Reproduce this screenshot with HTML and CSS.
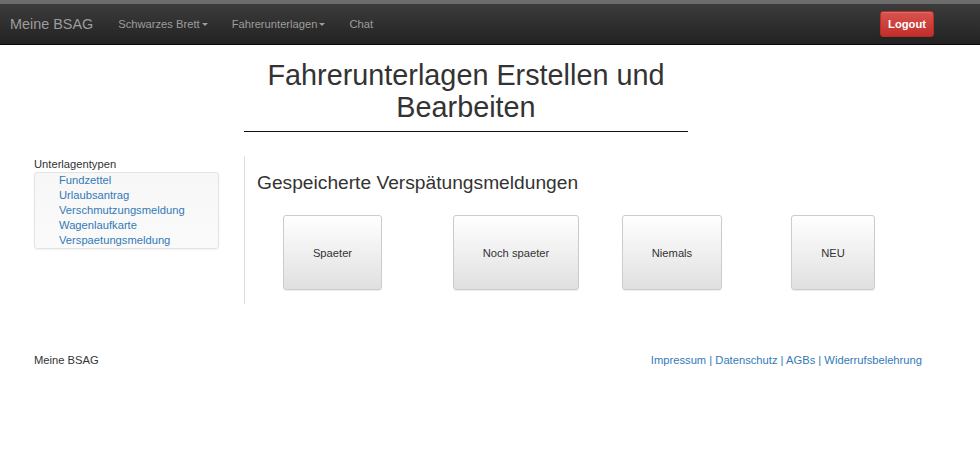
FILE: index.html
```html
<!DOCTYPE html>
<html lang="de">
<head>
<meta charset="utf-8">
<title>Meine BSAG</title>
<link rel="stylesheet" href="styles.css">
</head>
<body>
<div class="topstrip"></div>
<nav class="navbar">
  <a class="brand" href="#">Meine BSAG</a>
  <a class="navlink" href="#">Schwarzes Brett<span class="caret"></span></a>
  <a class="navlink" href="#">Fahrerunterlagen<span class="caret"></span></a>
  <a class="navlink" href="#">Chat</a>
  <button class="logout">Logout</button>
</nav>
<main class="container">
  <h1 class="title">Fahrerunterlagen Erstellen und Bearbeiten</h1>
  <div class="row">
    <aside class="sidebar">
      <div class="side-label">Unterlagentypen</div>
      <ul class="well">
        <li><a href="#">Fundzettel</a></li>
        <li><a href="#">Urlaubsantrag</a></li>
        <li><a href="#">Verschmutzungsmeldung</a></li>
        <li><a href="#">Wagenlaufkarte</a></li>
        <li><a href="#">Verspaetungsmeldung</a></li>
      </ul>
    </aside>
    <section class="content">
      <h3 class="subtitle">Gespeicherte Verspätungsmeldungen</h3>
      <div class="buttons">
        <button class="tile tile-1">Spaeter</button>
        <button class="tile tile-2">Noch spaeter</button>
        <button class="tile tile-3">Niemals</button>
        <button class="tile tile-4">NEU</button>
      </div>
    </section>
  </div>
  <footer class="footer">
    <span>Meine BSAG</span>
    <span class="links"><a href="#">Impressum</a> | <a href="#">Datenschutz</a> | <a href="#">AGBs</a> | <a href="#">Widerrufsbelehrung</a></span>
  </footer>
</main>
</body>
</html>
```

FILE: styles.css
```css
html, body {
  margin: 0;
  padding: 0;
  background: #fff;
}
body {
  font-family: "Liberation Sans", Arial, sans-serif;
  font-size: 11.2px;
  line-height: 16px;
  color: #333;
}
a {
  color: #337ab7;
  text-decoration: none;
}
.topstrip {
  height: 4px;
  background: #6c6c6c;
}
.navbar {
  height: 40px;
  border-bottom: 1px solid #080808;
  background: linear-gradient(to bottom, #3c3c3c 0%, #222 100%);
  display: flex;
  align-items: center;
}
.brand {
  color: #9d9d9d;
  font-size: 14.4px;
  padding: 0 13px 0 10px;
}
.navlink {
  color: #9d9d9d;
  font-size: 11.2px;
  padding: 0 12px;
  display: flex;
  align-items: center;
}
.caret {
  display: inline-block;
  width: 0;
  height: 0;
  margin-left: 2px;
  border-top: 3.5px solid #9d9d9d;
  border-left: 3.5px solid transparent;
  border-right: 3.5px solid transparent;
}
.logout {
  margin-left: auto;
  margin-right: 46px;
  width: 54px;
  height: 26px;
  padding: 0;
  font-family: "Liberation Sans", Arial, sans-serif;
  font-size: 11.2px;
  font-weight: bold;
  color: #fff;
  border: 1px solid #b92c28;
  border-radius: 3px;
  background: linear-gradient(to bottom, #d9534f 0%, #c12e2a 100%);
  box-shadow: inset 0 1px 0 rgba(255,255,255,.15), 0 1px 1px rgba(0,0,0,.075);
}
.container {
  width: 912px;
  margin: 0 auto;
  padding: 0 12px;
}
.title {
  width: 444px;
  margin: 15px 0 0 210px;
  padding-bottom: 8px;
  border-bottom: 1px solid #111;
  font-size: 28.8px;
  line-height: 31.7px;
  font-weight: 500;
  text-align: center;
  color: #333;
}
.row {
  display: flex;
  margin-top: 24px;
}
.sidebar {
  width: 210px;
}
.side-label {
  line-height: 16px;
}
.well {
  width: 159px;
  margin: 0;
  padding: 0 0 0 24px;
  list-style: none;
  border: 1px solid #e3e3e3;
  border-radius: 3px;
  background: linear-gradient(to bottom, #f7f7f7 0%, #fafafa 100%);
  box-shadow: 0 1px 2px rgba(0,0,0,.06);
  line-height: 15px;
}
.content {
  flex: 1;
  border-left: 1px solid #ddd;
  padding: 0 0 14px 12px;
}
.subtitle {
  margin: 16px 0 0;
  font-size: 19.2px;
  line-height: 21px;
  font-weight: 500;
  color: #333;
}
.buttons {
  display: flex;
  margin-top: 22px;
}
.tile {
  height: 75px;
  padding: 0;
  white-space: nowrap;
  font-family: "Liberation Sans", Arial, sans-serif;
  font-size: 11.2px;
  color: #333;
  border: 1px solid #ccc;
  border-radius: 3px;
  background: linear-gradient(to bottom, #fff 0%, #e0e0e0 100%);
  box-shadow: inset 0 1px 0 rgba(255,255,255,.15), 0 1px 1px rgba(0,0,0,.075);
}
.tile-1 { margin-left: 26px; width: 99px; }
.tile-2 { margin-left: 71px; width: 126px; }
.tile-3 { margin-left: 43px; width: 100px; }
.tile-4 { margin-left: 69px; width: 84px; }
.footer {
  display: flex;
  justify-content: space-between;
  margin-top: 48px;
  padding-right: 24px;
  line-height: 16px;
  color: #333;
}
.links {
  color: #337ab7;
}
```
